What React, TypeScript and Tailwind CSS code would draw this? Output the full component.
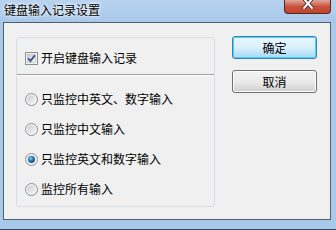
import React from 'react';

const font = { fontFamily: '"Microsoft YaHei", "Noto Sans CJK SC", sans-serif' };

function CheckBox() {
  return (
    <svg width="13" height="13" viewBox="0 0 13 13">
      <defs>
        <linearGradient id="cbg" x1="0" y1="0" x2="1" y2="1">
          <stop offset="0" stopColor="#cbcfd5" />
          <stop offset="1" stopColor="#f6f6f6" />
        </linearGradient>
      </defs>
      <rect x="0.5" y="0.5" width="12" height="12" fill="#f4f4f4" stroke="#8e8f8f" />
      <rect x="2.5" y="2.5" width="8" height="8" fill="url(#cbg)" stroke="#b0b4b9" strokeWidth="0.6" />
      <path d="M3.2 6.3 L5.4 9 L9.8 3.4" fill="none" stroke="#3d4f8b" strokeWidth="1.8" />
    </svg>
  );
}

function Radio({ checked }: { checked?: boolean }) {
  return (
    <svg width="13" height="13" viewBox="0 0 13 13">
      <defs>
        <linearGradient id="rbg" x1="0" y1="0" x2="1" y2="1">
          <stop offset="0" stopColor="#c9ccd1" />
          <stop offset="1" stopColor="#f7f7f7" />
        </linearGradient>
        <radialGradient id="rdot" cx="0.4" cy="0.35" r="0.7">
          <stop offset="0" stopColor="#8ad4f7" />
          <stop offset="0.5" stopColor="#1f7bbf" />
          <stop offset="1" stopColor="#0d3f6e" />
        </radialGradient>
      </defs>
      <circle cx="6.5" cy="6.5" r="6" fill="#f4f4f4" stroke="#8e8f8f" />
      <circle cx="6.5" cy="6.5" r="4.3" fill="url(#rbg)" />
      {checked && <circle cx="6.5" cy="6.5" r="3.4" fill="url(#rdot)" />}
    </svg>
  );
}

function Option({ label, checked }: { label: string; checked?: boolean }) {
  return (
    <div className="flex items-center h-[30px] gap-[3px] pl-[8px]">
      <Radio checked={checked} />
      <span className="text-[12px] leading-none text-black">{label}</span>
    </div>
  );
}

export default function App() {
  return (
    <div className="w-[336px] h-[230px] overflow-hidden relative bg-[#a9c9ea] flex flex-col" style={font}>
      {/* title bar */}
      <div className="h-[22px] flex items-center pl-[4px] bg-gradient-to-b from-[#b7d3ef] to-[#a8c8ea] relative">
        <span className="text-[12px] leading-none text-black mt-[-2px] [text-shadow:0_0_5px_#ffffff,0_0_3px_#ffffff]">键盘输入记录设置</span>
        <div className="absolute top-0 left-[284px] w-[47px] h-[14px] rounded-b-[4px] border border-t-0 border-[#5b2620] bg-gradient-to-b from-[#e0a597] via-[#c8523d] to-[#c0442d] overflow-hidden flex justify-center">
          <svg width="12" height="11" viewBox="0 0 12 11" className="mt-[-2px]">
            <path d="M2 1 L10 10 M10 1 L2 10" stroke="#3a2a2a" strokeWidth="3.6" strokeLinecap="square" />
            <path d="M2 1 L10 10 M10 1 L2 10" stroke="#ffffff" strokeWidth="2" strokeLinecap="square" />
          </svg>
        </div>
      </div>
      {/* client */}
      <div className="ml-[3px] mr-[5px] h-[198px] bg-[#f0f0f0] border border-[#55606c] flex items-start pt-[13px] pl-[12px]">
        <div className="mt-[1px] w-[199px] h-[170px] border border-[#d5dfe5] rounded-[3px] flex flex-col">
          <div className="h-[36px] pt-[13px]">
            <div className="flex items-center h-[14px] gap-[3px] pl-[8px]">
              <CheckBox />
              <span className="text-[12px] leading-none text-black">开启键盘输入记录</span>
            </div>
          </div>
          <div className="border-t border-[#a0a0a0] border-b border-b-white" />
          <div className="pt-[8px] flex flex-col">
            <Option label="只监控中英文、数字输入" />
            <Option label="只监控中文输入" />
            <Option label="只监控英文和数字输入" checked />
            <Option label="监控所有输入" />
          </div>
        </div>
        <div className="ml-[17px] flex flex-col gap-[11px]">
          <button className="w-[85px] h-[23px] rounded-[3px] border border-[#3c7fb1] bg-gradient-to-b from-[#eaf6fd] via-[#d9f0fc] to-[#a7d9f5] shadow-[inset_0_0_0_1px_#48d3fb] text-[12px] leading-none text-black" style={font}>
            确定
          </button>
          <button className="w-[85px] h-[23px] rounded-[3px] border border-[#707070] bg-gradient-to-b from-[#f2f2f2] via-[#ebebeb] to-[#cfcfcf] shadow-[inset_0_0_0_1px_#fcfcfc] text-[12px] leading-none text-black" style={font}>
            取消
          </button>
        </div>
      </div>
      <div className="flex-1 border-b border-[#3a4a5c]" />
    </div>
  );
}
